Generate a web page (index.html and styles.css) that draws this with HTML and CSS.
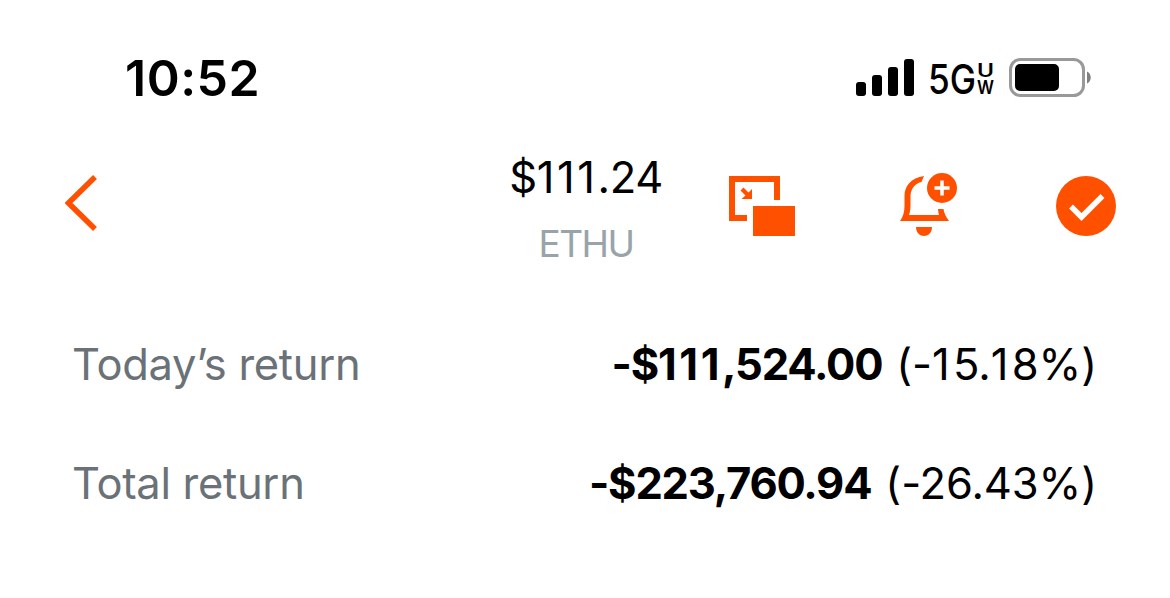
FILE: index.html
```html
<!DOCTYPE html>
<html lang="en">
<head>
  <meta charset="UTF-8">
  <title>ETHU</title>
  <link rel="stylesheet" href="styles.css">
</head>
<body>

  <div class="status-bar">
    <span class="time">10:52</span>
    <div class="status-icons">
      <svg class="signal" width="58" height="38" viewBox="0 0 58 38">
        <rect x="0" y="23" width="10" height="14" rx="3"/>
        <rect x="16" y="16" width="10" height="21" rx="3"/>
        <rect x="32" y="8" width="10" height="29" rx="3"/>
        <rect x="48" y="0" width="10" height="37" rx="3"/>
      </svg>
      <svg class="network" width="68" height="54" viewBox="0 -8 68 54">
        <text class="network-type" x="0" y="35" textLength="48" lengthAdjust="spacingAndGlyphs">5G</text>
        <text class="network-band" x="49" y="18" textLength="17" lengthAdjust="spacingAndGlyphs">U</text>
        <text class="network-band" x="49" y="35" textLength="17" lengthAdjust="spacingAndGlyphs">W</text>
      </svg>
      <svg class="battery" width="83" height="39" viewBox="0 0 83 39">
        <rect x="1.5" y="1.5" width="73" height="36" rx="10" fill="none" stroke="#999" stroke-width="3"/>
        <rect x="6" y="6" width="44" height="27" rx="5"/>
        <path d="M78 13.500C83 15.500 83 23.500 78 25.500Z" fill="#808080"/>
      </svg>
    </div>
  </div>

  <header class="header">
    <a class="back" href="#" aria-label="Back">
      <svg width="34" height="56" viewBox="0 0 34 56">
        <path d="M30 2L3.500 28L30 54" fill="none" stroke="#ff5000" stroke-width="5.500"/>
      </svg>
    </a>
    <div class="quote">
      <div class="price">$<span class="ones">111</span>.24</div>
      <div class="symbol">ETHU</div>
    </div>
    <div class="actions">
      <svg width="66" height="60" viewBox="0 0 66 60" fill="#ff5000">
        <path d="M0 0H51V24H45V6H6V39H18V45H0Z"/>
        <path d="M24 30H66V60H24Z"/>
        <path d="M14.500 11.500L19.500 16.500L23 13V23H12.500L16.500 19.500L11.500 14.500Z"/>
      </svg>
      <svg class="bell" width="58" height="64" viewBox="0 0 58 64" fill="#ff5000">
        <path d="M24 3C11 5 4.500 13 4.500 23V33C4.500 39 3 44 0 48H49C46 44 44 40 43.500 36H38C38 38 38.500 40 39 42H9C10 39 10.500 36 10.500 32V22C11 15 16 10 21.500 9Z"/>
        <path d="M16 54H32C32 60 28 63 24 63C20 63 16 60 16 54Z"/>
        <circle cx="42" cy="15" r="15"/>
        <path d="M42 7.500V22.500M34.500 15H49.500" stroke="#fff" stroke-width="3.500"/>
      </svg>
      <svg width="60" height="60" viewBox="0 0 60 60">
        <circle cx="30" cy="30" r="30" fill="#ff5000"/>
        <path d="M15 30.500L25.500 41L46.500 20" fill="none" stroke="#fff" stroke-width="5.500"/>
      </svg>
    </div>
  </header>

  <main class="returns">
    <div class="row">
      <span class="label">Today’s return</span>
      <span class="value"><b class="amount">-$<span class="ones">111</span>,524.00</b><span class="percent">(-<span class="ones">1</span>5.<span class="ones">1</span>8%)</span></span>
    </div>
    <div class="row">
      <span class="label">Total return</span>
      <span class="value"><b class="amount">-$223,760.94</b><span class="percent">(-26.43%)</span></span>
    </div>
  </main>

</body>
</html>
```
FILE: styles.css
```css
* {
  box-sizing: border-box;
}

body {
  margin: 0;
  background-color: #fff;
  color: #000;
  font-family: Inter, "Liberation Sans", sans-serif;
}

svg {
  display: block;
}

.status-bar {
  display: flex;
  justify-content: space-between;
  align-items: center;
  height: 156px;
  padding: 0 78px 0 125px;
}

.time {
  font-size: 50px;
  font-weight: 600;
  line-height: 60px;
  letter-spacing: 0.5px;
}

.status-icons {
  display: flex;
  align-items: center;
}

.network {
  margin-left: 14px;
  font-family: Inter, "Liberation Sans", sans-serif;
}

.network-type {
  font-size: 41px;
  font-weight: 500;
}

.network-band {
  font-size: 18px;
  font-weight: 600;
}

.battery {
  margin: 0 0 1px 13px;
}

.header {
  display: grid;
  grid-template-columns: 444px 154px 1fr;
  align-items: start;
  height: 150px;
  padding: 0 54px 0 65px;
}

.back {
  margin-top: 19px;
}

.quote {
  text-align: center;
  white-space: nowrap;
}

.price {
  font-size: 43.5px;
  font-weight: 400;
  line-height: 43px;
  letter-spacing: -0.4px;
}

.price .ones {
  letter-spacing: 2.6px;
}

.symbol {
  margin-top: 24px;
  font-size: 37px;
  font-weight: 400;
  line-height: 42px;
  letter-spacing: -1.6px;
  color: #98a3aa;
}

.actions {
  display: flex;
  justify-content: space-between;
  padding: 20px 0 0 66px;
}

.bell {
  margin: -3px -3px 0 3px;
}

.returns {
  padding: 0 73px 0 72px;
}

.row {
  display: flex;
  justify-content: space-between;
  height: 119px;
  font-size: 43.5px;
  line-height: 117px;
  white-space: nowrap;
}

.label {
  font-weight: 400;
  letter-spacing: -0.3px;
  color: #6a7278;
}

.value {
  display: flex;
  gap: 14px;
}

.amount {
  font-weight: 700;
  letter-spacing: -1.2px;
}

.amount .ones {
  letter-spacing: 2.6px;
}

.percent {
  font-weight: 400;
  letter-spacing: -0.1px;
}

.percent .ones {
  letter-spacing: 3.4px;
}
```
